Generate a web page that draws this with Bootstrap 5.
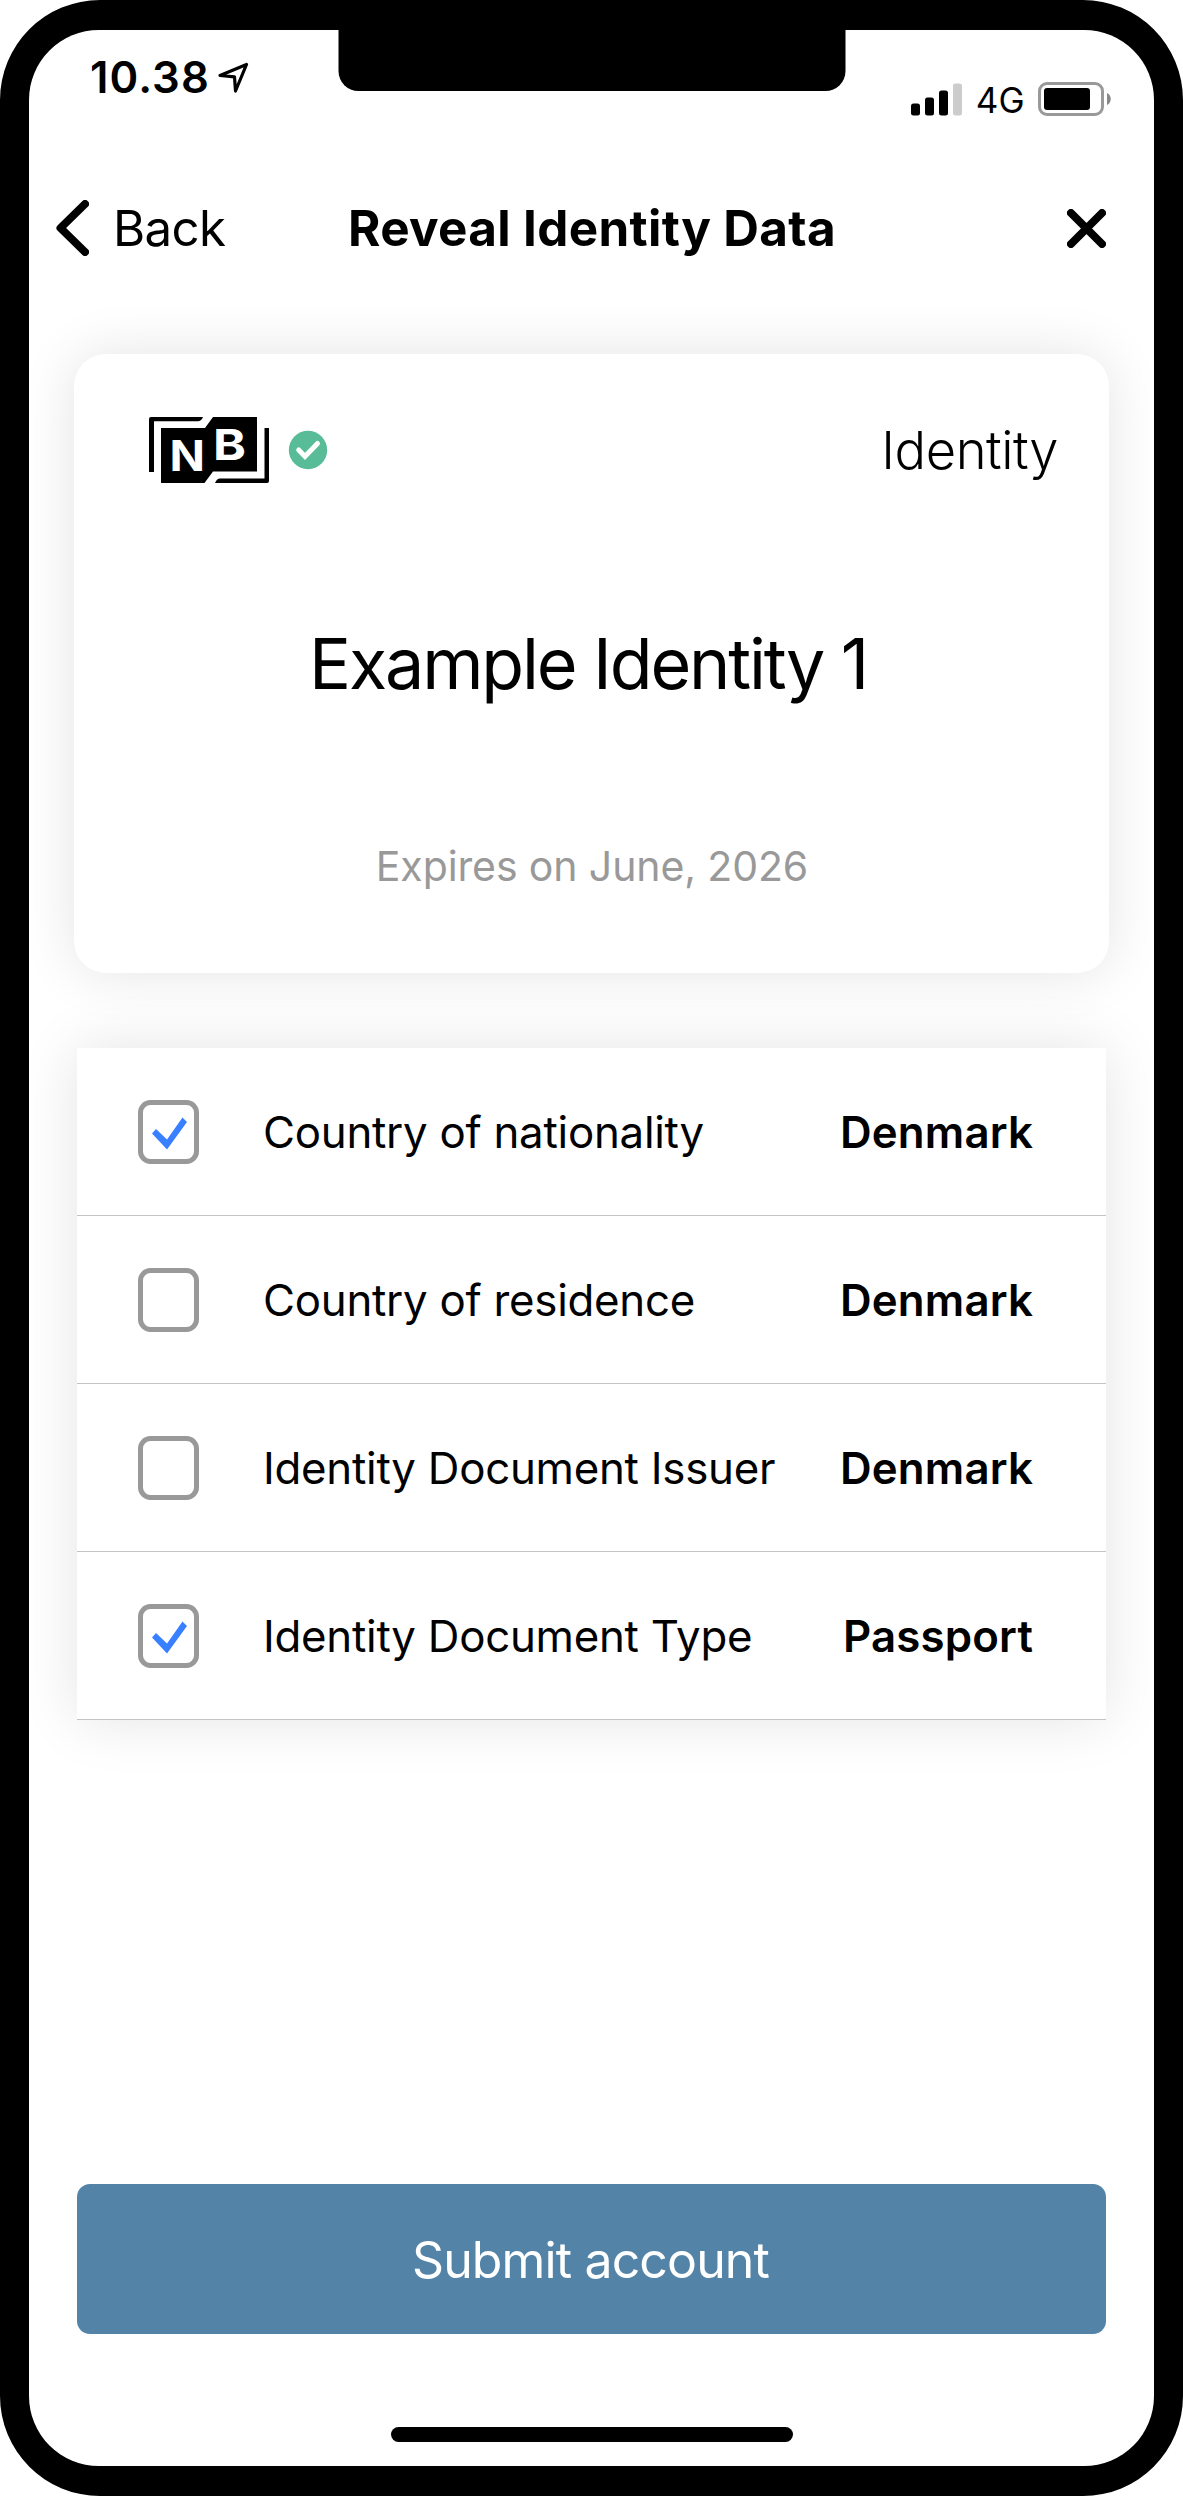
<!DOCTYPE html>
<html lang="en">
<head>
<meta charset="utf-8">
<meta name="viewport" content="width=device-width, initial-scale=1">
<title>Reveal Identity Data</title>
<link href="https://cdn.jsdelivr.net/npm/bootstrap@5.3.0/dist/css/bootstrap.min.css" rel="stylesheet">
<style>
  body { font-family: Inter, "Liberation Sans", sans-serif; color: #000; background: #fff; }
  svg { display: block; flex: none; }
  .phone { width: 1183px; height: 2496px; border: solid #000; border-width: 30px 29px; border-radius: 100px; background: #000; }
  .screen { border-radius: 70px; }
  .notch { width: 507px; height: 61px; background: #000; border-radius: 0 0 20px 20px; }
  .status { height: 140px; padding: 0 43px 0 61px; }
  .clock { margin-top: 22px; height: 52px; gap: 8px; font-size: 43.6px; font-weight: 600; letter-spacing: 1.1px; line-height: 1; }
  .clock svg { margin-top: -2px; }
  .signal { margin-top: 49px; height: 40px; gap: 13px; font-size: 35px; letter-spacing: .3px; line-height: 1; }
  .signal span { padding-top: 2px; }
  .topbar { height: 116px; padding: 0 48px 0 27px; font-size: 49.2px; line-height: 1; }
  .topbar-side { flex: 1 1 0; }
  .back { gap: 24px; letter-spacing: -.6px; }
  .topbar-title { font-size: 49.4px; font-weight: 700; letter-spacing: .33px; padding-left: 22px; }
  .topbar-title, .back span { padding-top: 1px; }
  .id-card { margin: 68px 45px 0; height: 619px; border-radius: 32px; padding: 63px 51px 0 75px; }
  .id-card, .data-list { background: #fff; box-shadow: 0 0 56px rgba(0,0,0,.11); }
  .id-kind { font-size: 52.4px; font-weight: 300; letter-spacing: -.44px; line-height: 66px; }
  .id-name { font-size: 70px; letter-spacing: -2.15px; line-height: 100px; margin: 131px 0 0 -31px; }
  .id-expiry { font-size: 41px; letter-spacing: -.11px; line-height: 60px; margin: 122px 0 0 -23px; color: #999; }
  .data-list { margin: 75px 48px 0; font-size: 43.8px; line-height: 1; }
  .data-row { height: 168px; padding: 0 73px 0 61px; border-bottom: 1px solid #c4c4c4; background: #fff; }
  .data-label { margin-left: 64px; letter-spacing: -.25px; padding-top: 3px; }
  .data-value { font-weight: 600; letter-spacing: .15px; padding-top: 3px; }
  .btn-submit { --bs-btn-color: #fff; --bs-btn-bg: #5384a8; --bs-btn-hover-bg: #47749a; --bs-btn-hover-color: #fff;
    height: 150px; margin: 0 48px; padding: 8px 14px 6px 12px; border: 0; border-radius: 13px; font-size: 50px; letter-spacing: -.87px; line-height: 1; }
  .home-bar { width: 402px; height: 15px; border-radius: 8px; background: #000; margin: 93px auto 24px; }
</style>
</head>
<body>
<div class="phone">
  <div class="screen bg-white h-100 position-relative overflow-hidden d-flex flex-column">
    <div class="notch position-absolute top-0 start-50 translate-middle-x"></div>

    <div class="status d-flex justify-content-between align-items-start">
      <div class="clock d-flex align-items-center">
        <span>10.38</span>
        <svg width="31" height="31" viewBox="218 61 31 31" fill="none" stroke="#000" stroke-width="3.200" stroke-linejoin="round"><path d="M220 74.500 246.500 63.500 235.500 90 234.500 75.800Z"/></svg>
      </div>
      <div class="signal d-flex align-items-center">
        <svg width="52" height="33" viewBox="0 0 52 33"><rect y="20.500" width="9" height="12" rx="2.500"/><rect x="14" y="14.500" width="9" height="18" rx="2.500"/><rect x="28" y="7.500" width="9" height="25" rx="2.500"/><rect x="42" y=".5" width="9" height="32" rx="2.500" fill="#ccc"/></svg>
        <span>4G</span>
        <svg width="73" height="34" viewBox="0 0 73 34"><rect x="1.500" y="1.500" width="63" height="31" rx="7.500" fill="none" stroke="#999" stroke-width="3"/><rect x="6" y="6" width="46" height="22" rx="3"/><path d="M69 11c5 2 5 10 0 12z" fill="#888"/></svg>
      </div>
    </div>

    <div class="topbar d-flex align-items-center">
      <div class="topbar-side back d-flex align-items-center">
        <svg width="33" height="56" viewBox="0 0 33 56" fill="none" stroke="#000" stroke-width="8" stroke-linecap="round" stroke-linejoin="round"><path d="M29 4 4.500 28 29 52"/></svg>
        <span>Back</span>
      </div>
      <div class="topbar-title text-nowrap">Reveal Identity Data</div>
      <div class="topbar-side d-flex justify-content-end">
        <svg width="39" height="39" viewBox="0 0 39 39" stroke="#000" stroke-width="8" stroke-linecap="round"><path d="M4 4 35 35M35 4 4 35"/></svg>
      </div>
    </div>

    <div class="id-card">
      <div class="d-flex justify-content-between align-items-center">
        <div class="d-flex align-items-center">
          <svg width="120" height="66" viewBox="149 417 120 66">
            <path d="M161 428H205L213 417H257V471.500H213L204.500 483H161Z"/>
            <path d="M151 417H203Q201 421.300 198 421.300H154V472H149V419Q149 417 151 417ZM264.500 428H269V481Q269 483 267 483H215Q217 478.600 220 478.600H264.500Z"/>
            <g fill="#fff" font-family="Inter, sans-serif" font-size="42.500" font-weight="700"><text x="169.500" y="471" textLength="35.500" lengthAdjust="spacingAndGlyphs">N</text><text x="213" y="460" textLength="33" lengthAdjust="spacingAndGlyphs">B</text></g>
          </svg>
          <svg class="ms-3" width="47" height="40" viewBox="285 430 47 40"><circle cx="308" cy="450" r="19.200" fill="#57bc97"/><path d="M298.700 450 305 456.500 317.500 443.500" fill="none" stroke="#fff" stroke-width="5" stroke-linecap="round"/></svg>
        </div>
        <div class="id-kind">Identity</div>
      </div>
      <div class="id-name text-center">Example Identity 1</div>
      <div class="id-expiry text-center">Expires on June, 2026</div>
    </div>

    <div class="data-list">
      <div class="data-row d-flex align-items-center">
        <svg width="61" height="64" viewBox="0 0 61 64"><rect x="2.500" y="2.500" width="56" height="59" rx="10" fill="none" stroke="#999" stroke-width="5"/><path d="M14 33.500 18 29 29 39.500 44.500 17.500 49 22 29 49.500Z" fill="#3880ff"/></svg>
        <div class="data-label flex-grow-1">Country of nationality</div><div class="data-value">Denmark</div>
      </div>
      <div class="data-row d-flex align-items-center">
        <svg width="61" height="64" viewBox="0 0 61 64"><rect x="2.500" y="2.500" width="56" height="59" rx="10" fill="none" stroke="#999" stroke-width="5"/></svg>
        <div class="data-label flex-grow-1">Country of residence</div><div class="data-value">Denmark</div>
      </div>
      <div class="data-row d-flex align-items-center">
        <svg width="61" height="64" viewBox="0 0 61 64"><rect x="2.500" y="2.500" width="56" height="59" rx="10" fill="none" stroke="#999" stroke-width="5"/></svg>
        <div class="data-label flex-grow-1">Identity Document Issuer</div><div class="data-value">Denmark</div>
      </div>
      <div class="data-row d-flex align-items-center">
        <svg width="61" height="64" viewBox="0 0 61 64"><rect x="2.500" y="2.500" width="56" height="59" rx="10" fill="none" stroke="#999" stroke-width="5"/><path d="M14 33.500 18 29 29 39.500 44.500 17.500 49 22 29 49.500Z" fill="#3880ff"/></svg>
        <div class="data-label flex-grow-1">Identity Document Type</div><div class="data-value">Passport</div>
      </div>
    </div>

    <button type="button" class="btn btn-submit mt-auto">Submit account</button>
    <div class="home-bar"></div>
  </div>
</div>
<script src="https://cdn.jsdelivr.net/npm/bootstrap@5.3.0/dist/js/bootstrap.bundle.min.js"></script>
</body>
</html>
